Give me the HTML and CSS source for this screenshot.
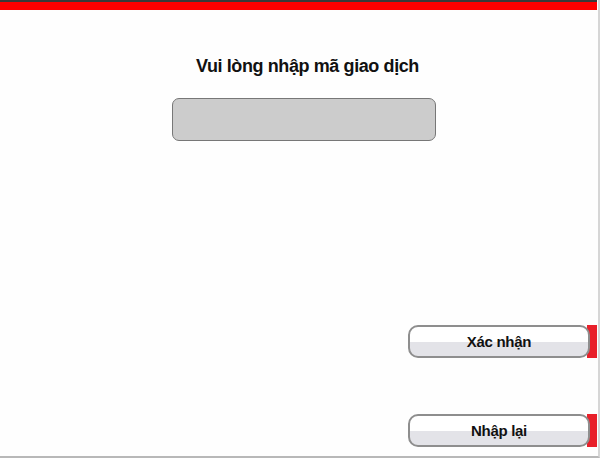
FILE: index.html
```html
<!DOCTYPE html>
<html lang="vi">
<head>
<meta charset="utf-8">
<title>Nhập mã giao dịch</title>
<link rel="stylesheet" href="styles.css">
</head>
<body>
<div class="frame">
  <div class="topbar"></div>
  <main class="content">
    <h1 class="title">Vui lòng nhập mã giao dịch</h1>
    <div class="input-box"></div>
    <div class="actions">
      <div class="action">
        <span class="tab"></span>
        <button class="btn">Xác nhận</button>
      </div>
      <div class="action">
        <span class="tab"></span>
        <button class="btn">Nhập lại</button>
      </div>
    </div>
  </main>
</div>
</body>
</html>
```
FILE: styles.css
```css
html, body {
  margin: 0;
  padding: 0;
  background: #ffffff;
}
.frame {
  width: 600px;
  height: 458px;
  box-sizing: border-box;
  border-right: 2px solid #d6d6d6;
  border-bottom: 2px solid #b8b8b8;
  background: #fefefe;
  font-family: "Liberation Sans", Arial, sans-serif;
  display: flex;
  flex-direction: column;
}
.topbar {
  height: 8px;
  border-top: 2px solid #3a3a3a;
  background: #ff0000;
  margin-right: 1px;
}
.content {
  flex: 1;
  display: flex;
  flex-direction: column;
}
.title {
  margin: 46px 0 0 0;
  font-size: 18px;
  font-weight: bold;
  letter-spacing: -0.4px;
  color: #111;
  text-align: center;
  line-height: 21px;
  padding-left: 17px;
}
.input-box {
  margin: 21px 0 0 172px;
  width: 264px;
  height: 43px;
  box-sizing: border-box;
  border: 1.5px solid #777;
  border-radius: 7px;
  background: #cccccc;
}
.actions {
  margin-top: 184px;
  display: flex;
  flex-direction: column;
  align-items: flex-end;
  gap: 56px;
}
.action {
  position: relative;
  width: 190px;
  height: 33px;
}
.tab {
  position: absolute;
  right: 1px;
  top: 0;
  width: 10px;
  height: 33px;
  background: #e8202a;
}
.btn {
  position: relative;
  width: 182px;
  height: 33px;
  box-sizing: border-box;
  border: 2px solid #8e8e8e;
  border-radius: 10px;
  background: linear-gradient(to bottom, #ffffff 0%, #ffffff 50%, #e3e3e8 50%, #e3e3e8 100%);
  font-family: "Liberation Sans", Arial, sans-serif;
  font-size: 15px;
  font-weight: bold;
  letter-spacing: -0.3px;
  color: #111;
  padding: 0;
  display: block;
}
```
